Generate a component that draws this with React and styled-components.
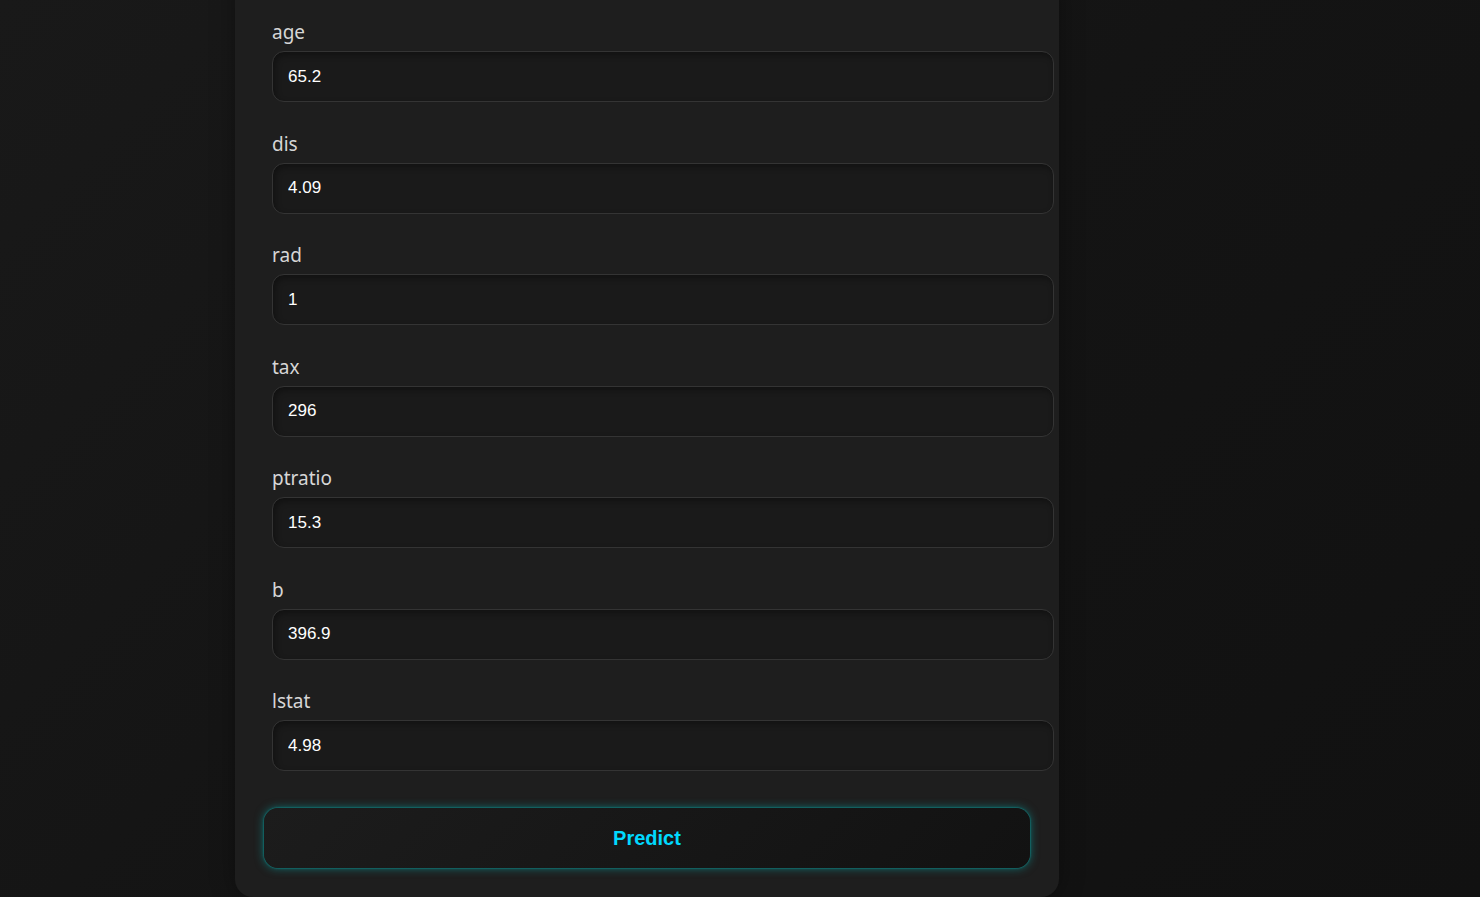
import React from 'react';
import styled, { createGlobalStyle } from 'styled-components';

const GlobalStyle = createGlobalStyle`
  html, body {
    margin: 0;
    padding: 0;
    height: 897px;
    overflow: hidden;
  }
  body {
    background: linear-gradient(135deg, #191919 0%, #141414 50%, #111111 100%);
    font-family: "Noto Sans", "Open Sans", sans-serif;
  }
`;

const Page = styled.div`
  height: 897px;
  overflow: hidden;
  display: flex;
  align-items: flex-end;
  padding-left: 235px;
`;

const Card = styled.form`
  width: 824px;
  flex-shrink: 0;
  box-sizing: border-box;
  background: #1e1e1e;
  border-radius: 0 0 18px 18px;
  padding: 40px 5px 29px 37px;
  box-shadow: 0 0 24px rgba(0, 0, 0, 0.35);
  display: flex;
  flex-direction: column;
`;

const Field = styled.div`
  display: flex;
  flex-direction: column;
  margin-bottom: 29.5px;

  &:last-of-type {
    margin-bottom: 37px;
  }
`;

const Label = styled.label`
  font-size: 19px;
  line-height: 25px;
  color: #d6d6d6;
  margin-bottom: 6px;
`;

const Input = styled.input`
  height: 51px;
  box-sizing: border-box;
  border: 1px solid #343434;
  border-radius: 12px;
  background: #1a1a1a;
  box-shadow: inset 2px 3px 6px rgba(0, 0, 0, 0.35);
  color: #ffffff;
  font-family: "Liberation Sans", Arial, sans-serif;
  font-size: 17px;
  padding: 0 15px;
  outline: none;
`;

const Button = styled.button`
  align-self: flex-start;
  margin-left: -8px;
  width: 766px;
  height: 60px;
  border: none;
  border-radius: 14px;
  background: linear-gradient(135deg, #1c1c1c 0%, #121212 100%);
  box-shadow: 0 0 10px rgba(0, 200, 200, 0.5), 0 0 2px rgba(0, 220, 220, 0.7);
  color: #00d9ff;
  font-family: "Liberation Sans", Arial, sans-serif;
  font-weight: bold;
  font-size: 20px;
  cursor: pointer;
`;

const fields = [
  ['age', '65.2'],
  ['dis', '4.09'],
  ['rad', '1'],
  ['tax', '296'],
  ['ptratio', '15.3'],
  ['b', '396.9'],
  ['lstat', '4.98'],
];

export default function App() {
  return (
    <>
      <GlobalStyle />
      <Page>
        <Card onSubmit={e => e.preventDefault()}>
          {fields.map(([name, value]) => (
            <Field key={name}>
              <Label htmlFor={name}>{name}</Label>
              <Input id={name} defaultValue={value} />
            </Field>
          ))}
          <Button type="submit">Predict</Button>
        </Card>
      </Page>
    </>
  );
}
